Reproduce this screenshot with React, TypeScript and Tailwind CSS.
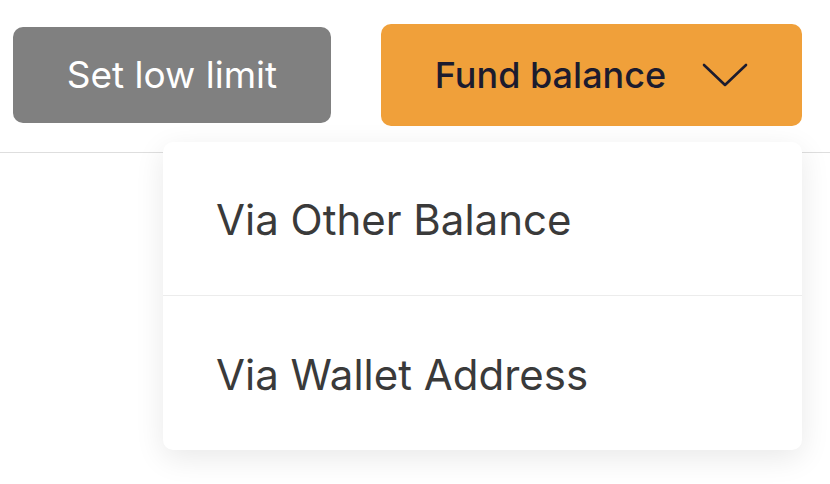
import React from 'react';

export default function App() {
  return (
    <div className="relative w-[830px] h-[484px] bg-white overflow-hidden" style={{ fontFamily: 'Inter, "Noto Sans", sans-serif' }}>
      {/* Action buttons */}
      <div className="flex items-center gap-[50px] pl-[13px] pt-[24px]">
        <button
          type="button"
          className="w-[318px] h-[96px] rounded-[10px] bg-[#808080] text-white text-[37px] flex items-center justify-center"
        >
          Set low limit
        </button>
        <button
          type="button"
          className="w-[421px] h-[102px] rounded-[10px] bg-[#f0a03a] text-[#1c1b2e] text-[36px] font-medium flex items-center justify-center gap-[36px]"
        >
          <span>Fund balance</span>
          <svg width="46" height="24" viewBox="0 0 46 24" fill="none" stroke="#1c1b2e" strokeWidth="2.6" strokeLinecap="round" strokeLinejoin="round">
            <path d="M2 2 L23 22 L44 2" />
          </svg>
        </button>
      </div>
      <div className="mt-[26px] h-px bg-[#dedede]" />

      {/* Dropdown menu */}
      <div className="absolute left-[163px] top-[142px] w-[639px] rounded-[10px] bg-white shadow-[0_8px_30px_rgba(0,0,0,0.09)] text-[#3a3a3a] text-[42px]">
        <div className="h-[154px] flex items-center pl-[53px] pt-[2px] border-b border-[#ececec]">Via Other Balance</div>
        <div className="h-[154px] flex items-center pl-[53px] pt-[2px]">Via Wallet Address</div>
      </div>
    </div>
  );
}
